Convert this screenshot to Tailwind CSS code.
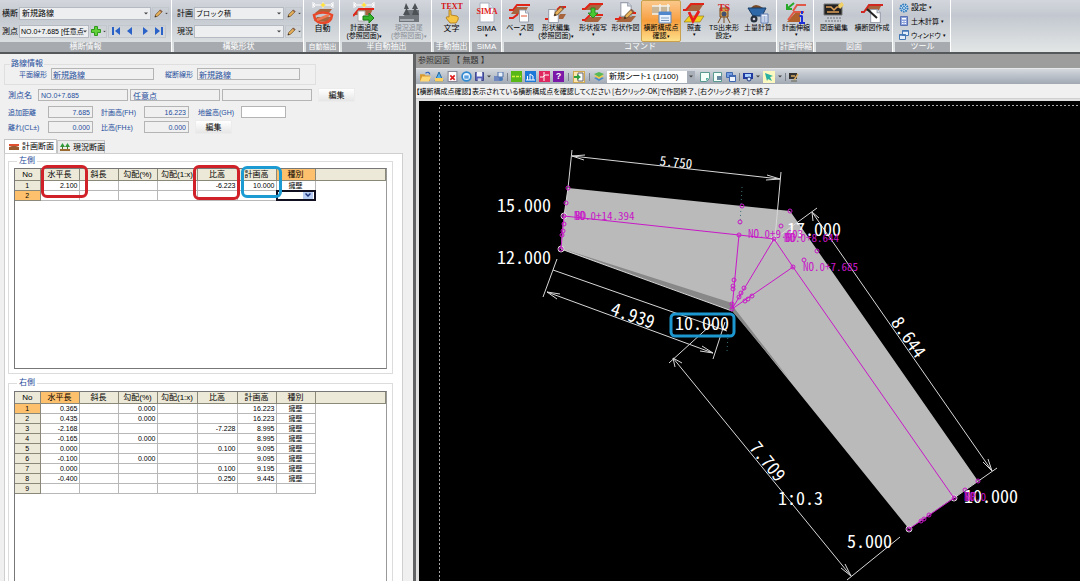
<!DOCTYPE html>
<html lang="ja">
<head>
<meta charset="utf-8">
<title>横断構成点確認</title>
<script src="https://cdn.jsdelivr.net/npm/@tailwindcss/browser@4"></script>
</head>
<body class="h-screen overflow-hidden flex flex-col bg-[#f0f0f0] font-['Liberation_Sans','Noto_Sans_CJK_JP',sans-serif] text-[8px] leading-[9px] text-black">

<svg class="hidden" aria-hidden="true">
  <symbol id="bench" viewBox="0 0 22 20">
    <path d="M4 9 8 4h12l-3 5z" fill="#a8643c"/><path d="M1 18l4-5h13l-3 5z" fill="#8f5230"/>
    <path d="M1 11h3l5-8h12" fill="none" stroke="#e02418" stroke-width="1.8"/><path d="M7 10h10l3-5" fill="none" stroke="#5a2c18" stroke-width="1.2"/>
  </symbol>
  <symbol id="page" viewBox="0 0 10 13"><path d="M.5.5h6l3 3v9h-9z" fill="#fff" stroke="#9aa0ac"/><path d="M6.500.5v3h3" fill="#dce2ec" stroke="#9aa0ac"/></symbol>
  <symbol id="pencil" viewBox="0 0 10 10"><path d="M1 9l1-3 5-5 2 2-5 5z" fill="#e8b25a" stroke="#6b4a20" stroke-width=".8"/><path d="M1 9l.6-1.800 1.200 1.200z" fill="#222"/><path d="M6.200 1.800 7.200.8l2 2-1 1z" fill="#8a5a4a"/></symbol>
  <symbol id="arrow" viewBox="0 0 4 3"><path d="M0 .5h4L2 2.500z" fill="#444"/></symbol>
  <symbol id="dims" viewBox="0 0 22 6"><path d="M1 0v6M11 0v6M21 0v6M1 3h20M3 1 1 3l2 2M19 1l2 2-2 2" fill="none" stroke="#fff"/><path d="M11 0l1 2 2 1-2 1-1 2-1-2-2-1 2-1z" fill="#ffe13a"/></symbol>
  <symbol id="floppy" viewBox="0 0 10 10"><path d="M.5.5h9v9h-9z" fill="#5660b8" stroke="#343c80"/><path d="M2 0h6v5H2z" fill="#f2f4fa"/><path d="M3 7h4v3H3z" fill="#d0d4e8"/></symbol>
</svg>

<header class="flex shrink-0 h-[54px] gap-[2px] border-b-2 border-[#55585a] bg-linear-to-b from-[#d3d6dc] via-[#c3c8d0] via-30% to-[#e2e6e6] whitespace-nowrap">
  <section class="flex flex-col w-[172px] shrink-0 border-r border-white">
    <div class="flex-1 flex flex-col justify-center gap-[5px] pt-[2px] pl-[2px]">
      <div class="flex items-center gap-[1px]">
        <label for="oudan" class="w-4">横断</label>
        <span class="relative flex"><select id="oudan" class="appearance-none w-[132px] h-[13px] pl-[2px] bg-[#eceef0] border border-[#b5bac2] leading-[11px]"><option>新規路線</option></select><svg class="absolute right-[3px] top-[5px] w-1 h-[3px]"><use href="#arrow"/></svg></span>
        <button aria-label="編集" class="flex items-center justify-center gap-[2px] w-[17px] h-[13px] border border-[#c2c7ce]"><svg class="size-[9px]"><use href="#pencil"/></svg><svg class="w-[3px] h-[3px]" viewBox="0 0 4 3"><use href="#arrow"/></svg></button>
      </div>
      <div class="flex items-center gap-[1px]">
        <label for="sokuten" class="w-4">測点</label>
        <span class="relative flex"><select id="sokuten" class="appearance-none w-[70px] h-[13px] pl-[1px] pr-1 bg-[#eceef0] border border-[#b5bac2] leading-[11px] text-[7px]"><option>NO.0+7.685 [任意点</option></select><svg class="absolute right-[2px] top-[5px] w-1 h-[3px]"><use href="#arrow"/></svg></span>
        <button aria-label="追加" class="flex items-center justify-center gap-[2px] w-[17px] h-[13px] border border-[#c2c7ce]"><svg class="size-[10px]" viewBox="0 0 10 10"><path d="M3.500.5h3v3h3v3h-3v3h-3v-3h-3v-3h3z" fill="#62d038" stroke="#2f9a1c"/></svg><svg class="w-[3px] h-[3px]" viewBox="0 0 4 3"><use href="#arrow"/></svg></button>
        <div class="flex h-[13px] border border-[#c2c7ce] text-[#2a62c8]">
          <button aria-label="最初" class="w-[13px] flex items-center justify-center"><svg class="size-2" viewBox="0 0 8 8"><path d="M0 0h2v8H0zM8 0v8L3 4z" fill="currentColor"/></svg></button>
          <button aria-label="前" class="w-[15px] flex items-center justify-center"><svg class="size-2" viewBox="0 0 8 8"><path d="M6 0v8L1 4z" fill="currentColor"/></svg></button>
          <button aria-label="次" class="w-[15px] flex items-center justify-center"><svg class="size-2" viewBox="0 0 8 8"><path d="M2 0v8l5-4z" fill="currentColor"/></svg></button>
          <button aria-label="最後" class="w-[13px] flex items-center justify-center"><svg class="size-2" viewBox="0 0 8 8"><path d="M6 0h2v8H6zM0 0v8l5-4z" fill="currentColor"/></svg></button>
        </div>
      </div>
    </div>
    <h2 class="h-[10px] bg-[#a7abaf] text-white text-center">横断情報</h2>
  </section>

  <section class="flex flex-col w-[130px] shrink-0 border-r border-white">
    <div class="flex-1 flex flex-col justify-center gap-[5px] pt-[2px] pl-[3px]">
      <div class="flex items-center gap-[1px]">
        <label for="keikaku" class="w-4">計画</label>
        <span class="relative flex"><select id="keikaku" class="appearance-none w-[90px] h-[13px] pl-[1px] bg-[#eceef0] border border-[#b5bac2] leading-[11px] text-[7px]"><option>ブロック積</option></select><svg class="absolute right-[3px] top-[5px] w-1 h-[3px]"><use href="#arrow"/></svg></span>
        <button aria-label="計画を編集" class="flex items-center justify-center gap-[2px] w-[17px] h-[13px] border border-[#c2c7ce]"><svg class="size-[9px]"><use href="#pencil"/></svg><svg class="w-[3px] h-[3px]" viewBox="0 0 4 3"><use href="#arrow"/></svg></button>
      </div>
      <div class="flex items-center gap-[1px]">
        <label for="genkyo" class="w-4">現況</label>
        <span class="relative flex"><select id="genkyo" class="appearance-none w-[90px] h-[13px] bg-[#eceef0] border border-[#b5bac2]"><option></option></select><svg class="absolute right-[3px] top-[5px] w-1 h-[3px]"><use href="#arrow"/></svg></span>
        <button aria-label="現況を編集" class="flex items-center justify-center gap-[2px] w-[17px] h-[13px] border border-[#c2c7ce]"><svg class="size-[9px]"><use href="#pencil"/></svg><svg class="w-[3px] h-[3px]" viewBox="0 0 4 3"><use href="#arrow"/></svg></button>
      </div>
    </div>
    <h2 class="h-[10px] bg-[#a7abaf] text-white text-center">構築形状</h2>
  </section>

  <section class="flex flex-col w-[34px] shrink-0 border-r border-white">
    <button class="flex-1 flex flex-col items-center pt-[2px]">
      <svg class="w-[22px] h-[22px]" viewBox="0 0 22 22"><use href="#dims" width="22" height="6"/><path d="M3 11l5-4h12l-3 4zM2 19l3-4h14l-4 5z" fill="#a8643c"/><path d="M2 13q9-5 18 0-1 8-9 8t-9-8z" fill="none" stroke="#e8482a" stroke-width="2.500"/><path d="M5 18l12-5" stroke="#f07850" stroke-width="2.500"/></svg>
      <span>自動</span></button>
    <h2 class="h-[10px] bg-[#a7abaf] text-white text-center text-[7px]">自動抽出</h2>
  </section>

  <section class="flex flex-col w-[90px] shrink-0 border-r border-white">
    <div class="flex-1 flex text-[7px] leading-2">
      <button class="w-[45px] flex flex-col items-center pt-[2px]">
        <svg class="w-[22px] h-[22px]" viewBox="0 0 22 22"><use href="#dims" width="22" height="6"/><path d="M1 13l6-6h13l-3 6z" fill="#a8643c"/><path d="M0 14l6-7h15" fill="none" stroke="#e02418" stroke-width="2"/><path d="M5 9h7v10H5z" fill="#fff" stroke="#aaa"/><path d="M10 14h6v-3l5 5-5 5v-3h-6z" fill="#35b52c" stroke="#187a14"/></svg>
        <span>計画追尾<br>(参照図面)<span class="text-[5px]">▾</span></span></button>
      <button disabled class="w-[45px] flex flex-col items-center pt-[2px] text-[#8b9097]">
        <svg class="w-[22px] h-[22px]" viewBox="0 0 22 22"><path d="M1 14h5l3-6h12v12H1z" fill="#70757b"/><path d="M8 1l3 6H9l3 6H5l3-6H6zM17 1l3 6h-2l3 6h-7l2-6h-2z" fill="#4d5257"/><path d="M2 18h14" stroke="#a8adb3" stroke-width="2"/></svg>
        <span>現況追尾<br>(参照図面)<span class="text-[5px]">▾</span></span></button>
    </div>
    <h2 class="h-[10px] bg-[#a7abaf] text-white text-center">半自動抽出</h2>
  </section>

  <section class="flex flex-col w-[36px] shrink-0 border-r border-white">
    <button class="flex-1 flex flex-col items-center pt-[1px]">
      <svg class="w-[22px] h-[23px]" viewBox="0 0 22 23"><text x="11" y="8" text-anchor="middle" font-family="Liberation Serif" font-weight="bold" font-size="8" fill="#d41414">TEXT</text><path d="M8 9q1.500-1 2 1v4l6 1q2 1 1 4l-2 3H9l-4-5q0-2 3-1z" fill="#f6c544" stroke="#a87414" stroke-width=".8"/></svg>
      <span>文字</span></button>
    <h2 class="h-[10px] bg-[#a7abaf] text-white text-center">手動抽出</h2>
  </section>

  <section class="flex flex-col w-[30px] shrink-0 border-r border-white">
    <button class="flex-1 flex flex-col items-center pt-[2px]">
      <svg class="w-[22px] h-[22px]" viewBox="0 0 22 22"><path d="M4 1h9l5 5v14H4z" fill="#fff" stroke="#a8b0bc"/><path d="M13 1v5h5" fill="#dce3ee" stroke="#a8b0bc"/><text x="11" y="12" text-anchor="middle" font-family="Liberation Serif" font-weight="bold" font-size="8" fill="#e02020">SIMA</text></svg>
      <span>SIMA</span><span class="text-[5px] leading-[5px]">▾</span></button>
    <h2 class="h-[10px] bg-[#a7abaf] text-white text-center">SIMA</h2>
  </section>

  <section class="flex flex-col w-[273px] shrink-0 border-r border-white">
    <div class="flex-1 flex text-[7px] leading-2">
      <button class="w-[32px] flex flex-col items-center pt-[2px]">
        <svg class="w-[22px] h-[22px]" viewBox="0 0 22 22"><path d="M2 12l5-7h12l-4 7z" fill="#a8643c"/><path d="M0 8h4l4-5h13M0 16h4l5-4" fill="none" stroke="#e02418" stroke-width="2"/><use href="#page" x="10" y="7" width="10" height="14"/><path d="M12 14h6" stroke="#e05030"/></svg>
        <span>ベース図</span><span class="text-[5px] leading-[5px]">▾</span></button>
      <button class="w-[40px] flex flex-col items-center pt-[2px]">
        <svg class="w-[22px] h-[22px]" viewBox="0 0 22 22"><path d="M12 17l3-5h6l-3 5z" fill="#a8643c"/><path d="M0 17h4l3-6M12 8l3-3h6" fill="none" stroke="#e02418" stroke-width="2"/><use href="#page" x="3" y="7" width="11" height="14"/><use href="#pencil" x="8" y="2" width="12" height="14"/></svg>
        <span>形状編集<br>(参照図面)<span class="text-[5px]">▾</span></span></button>
      <button class="w-[34px] flex flex-col items-center pt-[2px]">
        <svg class="w-[22px] h-[22px]" viewBox="0 0 22 22"><path d="M2 8l5-5h13l-4 5zM2 20l5-5h13l-4 5z" fill="#a8643c"/><path d="M0 7h3l5-5h13M0 18h3l5-5h13" fill="none" stroke="#e02418" stroke-width="2"/><path d="M9 6h4v5h3l-5 5-5-5h3z" fill="#48c832" stroke="#208018" stroke-width=".8"/></svg>
        <span>形状複写</span><span class="text-[5px] leading-[5px]">▾</span></button>
      <button class="w-[31px] flex flex-col items-center pt-[2px]">
        <svg class="w-[22px] h-[22px]" viewBox="0 0 22 22"><path d="M1 20l6-6h14l-5 6z" fill="#a8643c"/><path d="M0 17h4l4-6h13" fill="none" stroke="#e02418" stroke-width="2"/><use href="#page" x="5" y="0" width="12" height="15"/><use href="#pencil" x="8" y="6" width="12" height="12"/></svg>
        <span>形状作図</span></button>
      <button class="w-[40px] flex flex-col items-center pt-[1px] border border-[#c9a04c] rounded-[2px] bg-linear-to-b from-[#fbc88a] via-[#f79d3a] to-[#fde08a]">
        <svg class="w-[22px] h-[22px]" viewBox="0 0 22 22"><path d="M2 4h18v8H2z" fill="#c9b598"/><path d="M2 4h18M2 12h8M10 2v10M18 2v8" stroke="#f3f3ee" stroke-width="1.500"/><path d="M9 10h12v11H9z" fill="#e9f2fc" stroke="#5d87bf"/><path d="M9 10h12v3H9z" fill="#4f86cc"/><path d="M11 16h8M11 18.500h8" stroke="#7d9cc4"/></svg>
        <span>横断構成点<br>確認<span class="text-[5px]">▾</span></span></button>
      <button class="w-[26px] flex flex-col items-center pt-[2px]">
        <svg class="w-[22px] h-[22px]" viewBox="0 0 22 22"><path d="M2 9l5-6h13l-4 6z" fill="#a8643c"/><path d="M0 8h3l5-6h13" fill="none" stroke="#e02418" stroke-width="2"/><path d="M1 20l5-6h15l-4 6z" fill="#f0d020" stroke="#8c7010" stroke-width=".6"/><path d="M6 10l4 9 6-10" fill="none" stroke="#e81c1c" stroke-width="2.800"/></svg>
        <span>照査</span><span class="text-[5px] leading-[5px]">▾</span></button>
      <button class="w-[34px] flex flex-col items-center pt-[2px]">
        <svg class="w-[22px] h-[22px]" viewBox="0 0 22 22"><path d="M7 6h8v9H7zM8 15l-3 6M14 15l3 6M11 15v6" fill="#d8a050" stroke="#7a4c1c"/><circle cx="11" cy="12" r="2.500" fill="#405070"/><text x="11" y="9" text-anchor="middle" font-family="Liberation Serif" font-weight="bold" font-size="10" fill="#d42828">TS</text></svg>
        <span>TS出来形<br>設定<span class="text-[5px]">▾</span></span></button>
      <button class="w-[34px] flex flex-col items-center pt-[2px]">
        <svg class="w-[22px] h-[22px]" viewBox="0 0 22 22"><path d="M4 6q4-6 12 0z" fill="#7a4a24"/><path d="M1 6h18l-4 8H6z" fill="#2f68a8" stroke="#173c68"/><circle cx="7" cy="17" r="3.500" fill="#27303c"/><circle cx="7" cy="17" r="1.300" fill="#ccd"/><path d="M14 12h7v9h-7z" fill="#e8eefa" stroke="#5878b0"/><path d="M15.500 15h4M15.500 17h4M15.500 19h4" stroke="#5878b0" stroke-dasharray="1 .5"/></svg>
        <span>土量計算</span></button>
    </div>
    <h2 class="h-[10px] bg-[#a7abaf] text-white text-center">コマンド</h2>
  </section>

  <section class="flex flex-col w-[35px] shrink-0 border-r border-white">
    <button class="flex-1 flex flex-col items-center pt-[2px] text-[7px] leading-2">
      <svg class="w-[22px] h-[22px]" viewBox="0 0 22 22"><path d="M2 20l8-9h5v9z" fill="#b0602c"/><path d="M8 9l4-6h9M3 18l6-8h10" fill="none" stroke="#e05848" stroke-width="2"/><path d="M9 1 3 6M2 2v5h5" fill="none" stroke="#28a828" stroke-width="2"/><path d="M17 9v3M17 13.500V21M14.500 14H17M14 21h6" stroke="#2030d8" stroke-width="2"/></svg>
      <span>計画伸縮</span><span class="text-[5px] leading-[5px]">▾</span></button>
    <h2 class="h-[10px] bg-[#a7abaf] text-white text-center">計画伸縮</h2>
  </section>

  <section class="flex flex-col w-[77px] shrink-0 border-r border-white">
    <div class="flex-1 flex text-[7px] leading-2">
      <button class="w-[36px] flex flex-col items-center pt-[2px]">
        <svg class="w-[22px] h-[22px]" viewBox="0 0 22 22"><path d="M1 2h18v11H1z" fill="#222" stroke="#777"/><path d="M3 5h5l3 3 3-3h4M4 10h12" fill="none" stroke="#e0a058" stroke-width="1.500"/><path d="M15 3l4-3 2 3-4 4z" fill="#f0d068"/><path d="M4 16h14M2 19h16" stroke="#8a8f96" stroke-width="1.500" stroke-dasharray="2 1"/></svg>
        <span>図面編集</span></button>
      <button class="w-[40px] flex flex-col items-center pt-[2px]">
        <svg class="w-[22px] h-[22px]" viewBox="0 0 22 22"><path d="M4 9l4-5h12l-2 4z" fill="#a8643c"/><path d="M0 10h3l5-7h14" fill="none" stroke="#d02820" stroke-width="2"/><use href="#page" x="9" y="7" width="11" height="14"/><path d="M6 7l10 9" stroke="#222" stroke-width="2"/></svg>
        <span>横断図作成</span></button>
    </div>
    <h2 class="h-[10px] bg-[#a7abaf] text-white text-center">図面</h2>
  </section>

  <section class="flex flex-col w-[56px] shrink-0 border-r border-white">
    <div class="flex-1 flex flex-col justify-around pt-[1px] pl-1">
      <button class="flex items-center gap-[2px]"><svg class="size-[10px]" viewBox="0 0 10 10"><circle cx="5" cy="5" r="3.500" fill="#d8eaf8" stroke="#2f7cc0" stroke-width="2" stroke-dasharray="1.600 .8"/><circle cx="5" cy="5" r="1.500" fill="none" stroke="#2f7cc0"/></svg>設定<span class="text-[5px]">▾</span></button>
      <button class="flex items-center gap-[2px] text-[7px]"><svg class="size-[10px]" viewBox="0 0 10 10"><path d="M1.500.5h7v9h-7z" fill="#8fa4dc" stroke="#5a70b0"/><path d="M3 2h4v1.500H3z" fill="#fff"/><path d="M3 5.500h4M3 7.500h4" stroke="#fff" stroke-dasharray="1 .5"/></svg>土木計算<span class="text-[5px]">▾</span></button>
      <button class="flex items-center gap-[2px]"><svg class="size-[10px]" viewBox="0 0 10 10"><path d="M3.500.5h6v5h-6zM.5 4.500h6v5h-6z" fill="#e4effa" stroke="#4678b4"/><path d="M.5 5h6M3.500 1h6" stroke="#4678b4" stroke-width="1.500"/></svg><span class="text-[7px] [font-feature-settings:'palt']">ウィンドウ</span><span class="text-[5px]">▾</span></button>
    </div>
    <h2 class="h-[10px] bg-[#a7abaf] text-white text-center">ツール</h2>
  </section>
</header>

<main class="flex-1 min-h-0 flex">
  <aside class="w-[416px] shrink-0 border-r-3 border-[#606264] flex flex-col pt-[6px] pl-1 pr-[10px] text-[#1f4e9c] whitespace-nowrap overflow-hidden">
    <fieldset class="w-[312px] h-[25px] border border-[#dfdfdf] pl-[14px]">
      <legend class="-ml-[9px] px-[1px] h-[8px] leading-2">路線情報</legend>
      <div class="flex items-center text-[7px]">
        <label for="heimen" class="w-8">平面線形</label><input id="heimen" readonly value="新規路線" class="w-[103px] h-[12px] px-[1px] bg-[#f0f0f0] border border-[#b4b4b4] text-[8px]">
        <label for="juudan" class="w-8 ml-[11px]">縦断線形</label><input id="juudan" readonly value="新規路線" class="w-[103px] h-[12px] px-[1px] bg-[#f0f0f0] border border-[#b4b4b4] text-[8px]">
      </div>
    </fieldset>
    <div class="flex items-center gap-[2px] mt-[3px] pl-1">
      <label for="sokutenmei" class="w-7">測点名</label>
      <input id="sokutenmei" readonly value="NO.0+7.685" class="w-[90px] h-[12px] px-[2px] bg-[#f0f0f0] border border-[#b4b4b4] text-[7px]">
      <input aria-label="測点種別" readonly value="任意点" class="w-[90px] h-[12px] px-[2px] bg-[#f0f0f0] border border-[#b4b4b4]">
      <input aria-label="備考" readonly class="w-[90px] h-[12px] bg-[#f0f0f0] border border-[#b4b4b4]">
      <button class="ml-1 w-[37px] h-[14px] bg-linear-to-b from-white to-[#e6e6e6] border border-[#ececec] text-black">編集</button>
    </div>
    <div class="grid grid-cols-[40px_45px_8px_43px_45px_9px_43px_45px] items-center mt-[4px] pl-1 text-[7px]">
      <label for="tsuika">追加距離</label><input id="tsuika" readonly value="7.685" class="h-[12px] px-[2px] bg-[#f0f0f0] border border-[#b4b4b4] text-right"><span></span>
      <label for="fh">計画高(FH)</label><input id="fh" readonly value="16.223" class="h-[12px] px-[2px] bg-[#f0f0f0] border border-[#b4b4b4] text-right"><span></span>
      <label for="gh">地盤高(GH)</label><input id="gh" class="h-[12px] px-[2px] bg-white border border-[#b4b4b4] text-right">
    </div>
    <div class="grid grid-cols-[40px_45px_8px_43px_45px_6px_37px] items-center mt-[2px] pl-1 text-[7px]">
      <label for="cl">離れ(CL±)</label><input id="cl" readonly value="0.000" class="h-[12px] px-[2px] bg-[#f0f0f0] border border-[#b4b4b4] text-right"><span></span>
      <label for="fhd">比高(FH±)</label><input id="fhd" readonly value="0.000" class="h-[12px] px-[2px] bg-[#f0f0f0] border border-[#b4b4b4] text-right"><span></span>
      <button class="h-[14px] bg-linear-to-b from-white to-[#e6e6e6] border border-[#ececec] text-black text-[8px]">編集</button>
    </div>
    <div class="flex items-end mt-[5px] text-black" role="tablist">
      <button role="tab" aria-selected="true" class="flex items-center gap-[3px] w-[53px] h-[14px] pl-1 bg-white border border-b-0 border-[#c4c4c4] text-[8px]"><svg class="w-[10px] h-2 shrink-0" viewBox="0 0 10 8"><path d="M0 7h10V4L7 3H3L0 4z" fill="#9a5a30"/><path d="M0 2h10" stroke="#e05030" stroke-width="2"/></svg>計画断面</button>
      <button role="tab" aria-selected="false" class="flex items-center gap-[3px] w-[48px] h-[13px] pl-[2px] bg-[#ececec] border border-b-0 border-[#c4c4c4] text-[8px]"><svg class="w-[10px] h-2 shrink-0" viewBox="0 0 10 8"><path d="M0 6h10v2H0z" fill="#9a6a30"/><path d="M2.500 0 5 4H0zM7.500 0 10 4H5z" fill="#2f9a3a"/><path d="M2.500 3v3M7.500 3v3" stroke="#4a7a2a"/></svg>現況断面</button>
    </div>
    <div class="flex-1 min-h-0 flex flex-col bg-white border border-b-0 border-[#cfcfcf] pt-[2px] pl-[3px] pr-[9px]">
      <fieldset class="flex flex-col border border-[#dcdcdc] pl-[5px] pr-[5px] pb-[4px]">
        <legend class="ml-[3px] px-[2px] h-[10px]">左側</legend>
        <div class="relative h-[201px] mt-[2px] border-t border-l border-[#777] border-r border-b border-r-[#999] border-b-[#777] bg-white text-black">
          <table class="table-fixed w-full border-collapse">
            <colgroup><col class="w-[25px]"><col class="w-[39px]"><col class="w-[39px]"><col class="w-[39px]"><col class="w-[40px]"><col class="w-[40px]"><col class="w-[39px]"><col class="w-[39px]"><col></colgroup>
            <thead><tr class="h-[11px] bg-[#ece9d8] [&>th]:border-r [&>th]:border-b [&>th]:border-[#8a8878] [&>th]:font-normal"><th>No</th><th>水平長</th><th>斜長</th><th>勾配(%)</th><th>勾配(1:x)</th><th>比高</th><th>計画高</th><th class="bg-[#fdc06c]">種別</th><th></th></tr></thead>
            <tbody id="left-rows"></tbody>
          </table>
          <div class="absolute left-[26px] -top-[4px] w-[47px] h-[33px] rounded-[6px] border-3 border-[#d02028]"></div>
          <div class="absolute left-[178px] -top-[4px] w-[47px] h-[35px] rounded-[6px] border-3 border-[#d02028]"></div>
          <div class="absolute left-[226px] -top-[3px] w-[41px] h-[32px] rounded-[6px] border-3 border-[#1c9bd2]"></div>
        </div>
      </fieldset>
      <fieldset class="flex flex-col flex-1 min-h-0 mt-[4px] border border-b-0 border-[#dcdcdc] pl-[5px] pr-[5px]">
        <legend class="ml-[3px] px-[2px] h-[10px]">右側</legend>
        <div class="flex-1 h-[220px] mt-[3px] border-t border-l border-[#777] border-r border-r-[#999] bg-white text-black">
          <table class="table-fixed w-full border-collapse">
            <colgroup><col class="w-[25px]"><col class="w-[39px]"><col class="w-[39px]"><col class="w-[39px]"><col class="w-[40px]"><col class="w-[40px]"><col class="w-[39px]"><col class="w-[39px]"><col></colgroup>
            <thead><tr class="h-[11px] bg-[#ece9d8] [&>th]:border-r [&>th]:border-b [&>th]:border-[#8a8878] [&>th]:font-normal"><th>No</th><th class="bg-[#fdc06c]">水平長</th><th>斜長</th><th>勾配(%)</th><th>勾配(1:x)</th><th>比高</th><th>計画高</th><th>種別</th><th></th></tr></thead>
            <tbody id="right-rows"></tbody>
          </table>
        </div>
      </fieldset>
    </div>
  </aside>

  <section class="flex-1 min-w-0 flex flex-col">
    <h1 class="h-[14px] bg-[#9d9d9d] pl-[2px] leading-[13px] text-[8px] text-[#333]">参照図面 【 無題 】</h1>
    <div class="flex items-center h-[16px] gap-[3px] pl-1 border-t border-[#e4e6e8] bg-linear-to-b from-[#d4d8de] to-[#a0a8b2] [&>button]:shrink-0 [&>svg]:shrink-0" role="toolbar">
      <button aria-label="開く"><svg class="size-[11px]" viewBox="0 0 10 10"><path d="M0 3h4l1 1h4v5H0z" fill="#d89a30"/><path d="M2 5h8L8 9.500H0z" fill="#ffd878"/><path d="M5 2q3-2 4 1" stroke="#2860c0" fill="none"/></svg></button>
      <button aria-label="追加読込"><svg class="size-[10px]" viewBox="0 0 10 10"><path d="M5 0l4 9H1z" fill="#58b0e8" stroke="#2468a0"/><path d="M1 6h8v3.500H1z" fill="#ffd060"/></svg></button>
      <button aria-label="閉じる"><svg class="size-[11px]" viewBox="0 0 10 10"><path d="M1 .5h8v9H1z" fill="#fff" stroke="#889"/><path d="M3 4l4 4M7 4 3 8" stroke="#e02020" stroke-width="1.500"/></svg></button>
      <button aria-label="更新"><svg class="size-[11px]" viewBox="0 0 10 10"><circle cx="5" cy="5" r="4" fill="#e8f4ff" stroke="#3088d0" stroke-width="1.500"/><path d="M3 4h4v3H3z" fill="#58a0e0"/></svg></button>
      <button aria-label="保存"><svg class="size-[9px]"><use href="#floppy" width="9" height="9"/></svg></button>
      <svg class="w-1 h-[3px]"><use href="#arrow" width="4" height="3"/></svg>
      <button aria-label="印刷"><svg class="size-[10px]" viewBox="0 0 10 10"><path d="M0 4h7v5H0z" fill="#7088c0"/><path d="M4 0h5v5H4z" fill="#e8f0fa" stroke="#5070a8"/><circle cx="7" cy="7" r="2" fill="#4878b8"/></svg></button>
      <span class="w-px h-2 bg-[#7d838c]"></span>
      <button aria-label="縦断"><svg class="size-[11px]" viewBox="0 0 11 11"><path d="M0 0h11v11H0z" fill="#58b818"/><path d="M1 5.500h9" stroke="#d8f040" stroke-width="1.500" stroke-dasharray="3 1"/></svg></button>
      <button aria-label="グラフ"><svg class="size-[11px]" viewBox="0 0 11 11"><path d="M0 0h11v11H0z" fill="#1c78d8"/><path d="M1 9h9M2.500 9V5M5 9V3l3 2v4" stroke="#fff" fill="none"/></svg></button>
      <button aria-label="横断"><svg class="size-[11px]" viewBox="0 0 11 11"><path d="M0 0h11v11H0z" fill="#e02860"/><path d="M1 6h3l2-2h4M5 1v9" stroke="#fff" fill="none"/></svg></button>
      <button aria-label="ヘルプ" class="size-[11px] bg-[#7c18a8] text-white font-bold text-[9px] leading-[11px]">?</button>
      <span class="w-px h-2 mx-px bg-[#7d838c]"></span>
      <button aria-label="取込" class="size-3 flex items-center justify-center border border-[#d0a850] bg-[#fbe6b0]"><svg class="size-[10px]" viewBox="0 0 10 10"><path d="M4 1h5v8H4z" fill="#fff" stroke="#667"/><path d="M0 4h3V2l4 3-4 3V6H0z" fill="#30a040"/></svg></button>
      <span class="w-px h-2 mx-px bg-[#7d838c]"></span>
      <svg class="size-[10px]" viewBox="0 0 10 10"><path d="M0 6l5-2 5 2-5 3z" fill="#4888c8"/><path d="M0 4l5-2 5 2-5 3z" fill="#f0c850"/><path d="M0 2l5-2 5 2-5 3z" fill="#58b858"/></svg>
      <span class="relative flex shrink-0"><select aria-label="シート" class="appearance-none w-[88px] h-3 pl-[2px] bg-white leading-3 [font-feature-settings:'palt']"><option>新規シート1 (1/100)</option></select><span class="absolute right-0 top-0 w-2 h-3 bg-[#a9afb8] flex items-center justify-center"><svg class="w-1 h-[3px]"><use href="#arrow"/></svg></span></span>
      <button aria-label="新規シート" class="ml-[2px]"><svg class="size-[10px]" viewBox="0 0 10 10"><path d="M.5.5h9v6l-3 3h-6z" fill="#f4fffa" stroke="#5a9a90"/><path d="M9 6H6v3z" fill="#58b0a0"/></svg></button>
      <button aria-label="シート設定"><svg class="size-[10px]" viewBox="0 0 10 10"><path d="M.5.5h8v9h-8z" fill="#f4fffa" stroke="#5a9a90"/><path d="M4 4h5v4H4z" fill="#6888a0"/></svg></button>
      <button aria-label="シート一覧"><svg class="size-[10px]" viewBox="0 0 10 10"><path d="M.5.5h6v5h-6z" fill="#78a0e0" stroke="#4068b0"/><path d="M3.500 3.500h6v6h-6z" fill="#eef4ff" stroke="#4068b0"/><path d="M3 4h7" stroke="#4068b0" stroke-width="2"/></svg></button>
      <span class="w-px h-2 bg-[#7d838c]"></span>
      <button aria-label="表示"><svg class="size-[10px]" viewBox="0 0 10 10"><path d="M0 1h10v6H0z" fill="#2038a0"/><path d="M2 2h6v3H2z" fill="#a8d0ff"/><circle cx="6" cy="7" r="2" fill="#d8e8ff" stroke="#203880"/></svg></button>
      <svg class="w-1 h-[3px]"><use href="#arrow" width="4" height="3"/></svg>
      <button aria-label="選択" class="size-3 flex items-center justify-center bg-[#fdf8c0]"><svg class="size-2" viewBox="0 0 8 8"><path d="M0 0l8 3-3 1 2 4-4-2-1 2z" fill="#28b0a0"/></svg></button>
      <svg class="w-1 h-[3px]"><use href="#arrow" width="4" height="3"/></svg>
      <span class="w-px h-2 bg-[#7d838c]"></span>
      <button aria-label="図面編集"><svg class="size-[10px]" viewBox="0 0 10 10"><path d="M0 1h8v6H0z" fill="#333"/><path d="M2 4h4M5 8l4-6" stroke="#d8a860" stroke-width="1.500"/><path d="M2 9h6" stroke="#665"/></svg></button>
    </div>
    <p class="h-[15px] leading-[14px] text-[7px] whitespace-nowrap bg-[#f0f0f0] border-b border-[#d0d0d0] font-['Noto_Sans_CJK_JP',sans-serif] [font-feature-settings:'palt']">【横断構成点確認】表示されている横断構成点を確認してください [右クリック-OK]で作図終了、[右クリック-終了]で終了</p>
    <div class="flex-1 min-h-0 bg-black border-l-3 border-t-2 border-[#e0e0e0] overflow-hidden">
      <svg class="block w-full h-full" viewBox="419 101 661 480" preserveAspectRatio="xMinYMin slice" role="img" aria-label="展開図" font-family="'Noto Sans Mono CJK JP','Noto Sans CJK JP',monospace" font-weight="300">
        <path d="M439.500 581V105.500H1080" fill="none" stroke="#aaa" stroke-dasharray="2 2"/>
        <path d="M568 188 790 211 978 481 909 529 732 310 561 249 564 216z" fill="#bababa"/>
        <path d="M563 249 732 303 735 309 790 380 732 311z" fill="#888"/>
        <g fill="none" stroke="#d8d8d8" stroke-width="1">
          <path d="M572 150 568 188 564 216 561 249M561 249 732 311" />
          <path d="M572 156 780 179M781 172 775 238"/>
          <path d="M547 292 713 353M553 270 727 331M557 259 543 297M725 322 713 359"/>
          <path d="M713 323 669 363M673 358 851 576M847 580 900 537"/>
          <path d="M812 212 992 471M817 208 776 238M997 468 954 498"/>
          <path d="M585 155 572 156 584 160M767 175 780 179 766 180M560 294 547 292 557 299M702 346 713 353 700 351M675 367 673 358 682 363M841 568 851 576 845 564M813 221 812 212 819 218M983 462 992 471 988 459"/>
          <circle cx="564" cy="216" r="3"/><circle cx="561" cy="249" r="3"/><circle cx="774" cy="239" r="3"/><circle cx="954" cy="498" r="3"/><circle cx="909" cy="529" r="3"/>
        </g>
        <path d="M742 187 740 225M728 334 727 352" stroke="#3a7078" stroke-dasharray="1 3"/>
        <g fill="none" stroke="#c818c8" stroke-width="1">
          <path d="M561 249 564 216 739 235 774 239 793 267 954 498 909 529M739 235 732 309 774 239M732 309 793 267"/>
          <g id="points"></g>
        </g>
        <g fill="#fff" font-size="18">
          <text x="497" y="212">15.000</text><text x="497" y="264">12.000</text><text x="675" y="330">10.000</text>
          <text x="787" y="236">17.000</text><text x="847" y="548">5.000</text><text x="964" y="503">10.000</text><text x="778" y="505">1:0.3</text>
          <text x="676" y="167" font-size="13" text-anchor="middle" transform="rotate(6 676 162)">5.750</text>
          <text x="633" y="322" text-anchor="middle" transform="rotate(19 633 315)">4.939</text>
          <text x="768" y="468" text-anchor="middle" transform="rotate(51 768 461)">7.709</text>
          <text x="909" y="344" text-anchor="middle" transform="rotate(55 909 337)">8.644</text>
        </g>
        <g fill="#c818c8" font-size="11">
          <text x="574" y="220">NO.0+14.394</text><text x="575" y="220">BD</text>
          <text x="748" y="238">NO.0+9.603</text><text x="784" y="242">NO.0+8.644</text><text x="785" y="242">BD</text>
          <text x="803" y="271">NO.0+7.685</text><text x="964" y="501">NO.0</text><text x="965" y="501">BP</text>
        </g>
        <rect x="671" y="314" width="63" height="22" rx="4" fill="none" stroke="#1c97d0" stroke-width="3"/>
      </svg>
    </div>
  </section>
</main>

<script>
// Rows hold: horizontal length, slant, grade %, grade 1:x, height difference, planned height, type.
const leftRows = [["2.100","","","","-6.223","10.000","擁壁"],["","","","","","",null]];
const rightRows = [
  ["0.365","","0.000","","","16.223","擁壁"],["0.435","","0.000","","","16.223","擁壁"],
  ["-2.168","","","","-7.228","8.995","擁壁"],["-0.165","","0.000","","","8.995","擁壁"],
  ["0.000","","","","0.100","9.095","擁壁"],["-0.100","","0.000","","","9.095","擁壁"],
  ["0.000","","","","0.100","9.195","擁壁"],["-0.400","","","","0.250","9.445","擁壁"],
  ["","","","","","",""]];
const typeSelect = '<span class="relative flex"><select aria-label="種別" class="appearance-none w-full h-[9px] bg-white outline-2 outline-[#101020] -outline-offset-1"><option></option></select><span class="absolute right-[2px] top-[1px] w-[10px] h-[7px] bg-[#b8cdf4] flex items-center justify-center"><svg class="w-[6px] h-1" viewBox="0 0 6 4"><path d="M.5.5 3 3 5.500.5" fill="none" stroke="#203880" stroke-width="1.500"/></svg></span></span>';
function render(id, rows, active) {
  document.getElementById(id).innerHTML = rows.map((r, i) =>
    '<tr class="h-[10px] text-[7px] leading-[9px]"><th scope="row" class="font-normal border-r border-b border-[#8a8878] ' +
    (i === active ? 'bg-[#fdc06c]' : 'bg-[#ece9d8]') + '">' + (i + 1) + '</th>' +
    r.map((v, c) => '<td class="border-r border-b border-[#b8b8b8] ' + (c === 6 ? 'text-center' : 'text-right pr-[1px]') + '">' +
      (v === null ? typeSelect : v) + '</td>').join('') + '</tr>').join('');
}
render('left-rows', leftRows, 1);
render('right-rows', rightRows, 0);

const points = [[568,188],[566,203],[564,216],[564,224],[563,231],[562,235],[561,249],[742,206],[740,222],[739,235],[790,211],[781,226],[774,239],[804,260],[817,251],[793,267],[734,280],[733,286],[733,289],[732,304],[732,309],[744,288],[741,293],[739,297],[752,296],[748,299],[745,301],[954,498],[965,490],[978,481],[929,515],[924,519],[921,521],[909,529]];
document.getElementById('points').innerHTML = points.map(([x, y]) => `<circle cx="${x}" cy="${y}" r="2"/>`).join('');
</script>
</body>
</html>
